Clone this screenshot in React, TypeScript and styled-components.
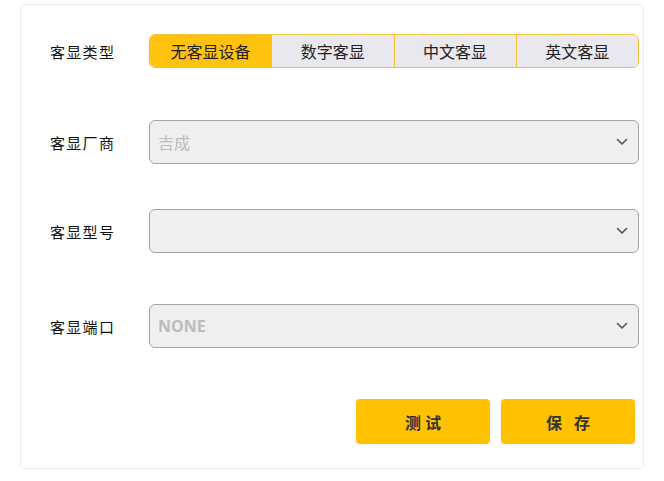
import React from 'react'
import styled, { createGlobalStyle } from 'styled-components'

const GlobalStyle = createGlobalStyle`
  html, body {
    margin: 0;
    padding: 0;
    background: #ffffff;
  }
  body {
    font-family: "Noto Sans CJK SC", "Noto Sans", sans-serif;
  }
`

const Card = styled.div`
  box-sizing: border-box;
  margin: 4px 0 0 20px;
  width: 624px;
  height: 465px;
  border: 1px solid #ececec;
  border-radius: 4px;
  padding: 29px 4px 0 29px;
  display: flex;
  flex-direction: column;
`

const Row = styled.div<{ $gap: number }>`
  display: flex;
  align-items: center;
  margin-bottom: ${(p) => p.$gap}px;
`

const Label = styled.div`
  width: 99px;
  flex: none;
  font-size: 15px;
  color: #111;
  letter-spacing: 1.3px;
`

const Segmented = styled.div`
  flex: 1;
  display: flex;
  height: 34px;
  box-sizing: border-box;
  border: 1px solid #f3c233;
  border-radius: 6px;
  overflow: hidden;
`

const Segment = styled.button<{ $active?: boolean }>`
  flex: 1;
  border: none;
  border-left: 1px solid #f3c233;
  background: ${(p) => (p.$active ? '#ffc20e' : '#e8e8ee')};
  color: #222;
  font-family: inherit;
  font-size: 16px;
  padding: 0;
  cursor: pointer;

  &:first-child {
    border-left: none;
  }
`

const Select = styled.div<{ $bold?: boolean }>`
  flex: 1;
  height: 44px;
  box-sizing: border-box;
  border: 1px solid #a3a3a3;
  border-radius: 6px;
  background: #efefef;
  display: flex;
  align-items: center;
  justify-content: space-between;
  padding: 0 10px 0 8px;
  color: #bcbcbc;
  font-size: 16px;
  font-family: ${(p) => (p.$bold ? '"Open Sans", sans-serif' : 'inherit')};
  font-weight: ${(p) => (p.$bold ? 700 : 400)};
`

const Actions = styled.div`
  display: flex;
  justify-content: flex-end;
  gap: 11px;
  padding-right: 4px;
`

const ActionButton = styled.button<{ $spacing: number }>`
  width: 134px;
  height: 45px;
  border: none;
  border-radius: 4px;
  background: #ffc200;
  color: #333;
  font-family: inherit;
  font-size: 16px;
  font-weight: 700;
  letter-spacing: ${(p) => p.$spacing}px;
  text-indent: ${(p) => p.$spacing}px;
  cursor: pointer;
`

const Chevron = () => (
  <svg width="12" height="8" viewBox="0 0 12 8" fill="none">
    <path d="M1.5 1.5 6 6l4.5-4.5" stroke="#555" strokeWidth="1.6" strokeLinecap="round" strokeLinejoin="round" />
  </svg>
)

const types = ['无客显设备', '数字客显', '中文客显', '英文客显']

export default function App() {
  return (
    <>
      <GlobalStyle />
      <Card>
        <Row $gap={52}>
          <Label>客显类型</Label>
          <Segmented>
            {types.map((t, i) => (
              <Segment key={t} $active={i === 0}>
                {t}
              </Segment>
            ))}
          </Segmented>
        </Row>
        <Row $gap={45}>
          <Label>客显厂商</Label>
          <Select>
            <span>吉成</span>
            <Chevron />
          </Select>
        </Row>
        <Row $gap={51}>
          <Label>客显型号</Label>
          <Select>
            <span></span>
            <Chevron />
          </Select>
        </Row>
        <Row $gap={51}>
          <Label>客显端口</Label>
          <Select $bold>
            <span>NONE</span>
            <Chevron />
          </Select>
        </Row>
        <Actions>
          <ActionButton $spacing={4}>测试</ActionButton>
          <ActionButton $spacing={12}>保存</ActionButton>
        </Actions>
      </Card>
    </>
  )
}
